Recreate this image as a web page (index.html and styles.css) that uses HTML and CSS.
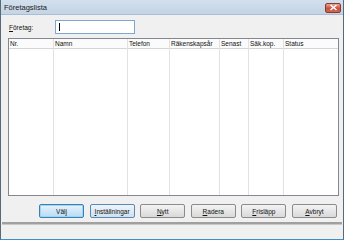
FILE: index.html
```html
<!DOCTYPE html>
<html lang="sv">
<head>
    <meta charset="UTF-8">
    <title>Företagslista</title>
    <link rel="stylesheet" href="styles.css">
</head>
<body>
    <div class="window">
        <div class="titlebar">
            <span class="title">Företagslista</span>
            <span class="close">
                <svg width="9" height="7" viewBox="0 0 9 7"><path d="M1.5 1 L7.5 6 M7.5 1 L1.5 6" stroke="#fff" stroke-width="1.6"/></svg>
            </span>
        </div>
        <div class="client">
            <div class="form-row">
                <label class="label"><u>F</u>öretag:</label>
                <div class="input"><span class="caret"></span></div>
            </div>
            <div class="list">
                <div class="col"><div class="head">Nr.</div></div>
                <div class="col"><div class="head">Namn</div></div>
                <div class="col"><div class="head">Telefon</div></div>
                <div class="col"><div class="head">Räkenskapsår</div></div>
                <div class="col"><div class="head">Senast</div></div>
                <div class="col"><div class="head">Säk.kop.</div></div>
                <div class="col last"><div class="head">Status</div></div>
            </div>
            <div class="buttons">
                <button class="btn default">Välj</button>
                <button class="btn hot"><u>I</u>nställningar</button>
                <button class="btn"><u>N</u>ytt</button>
                <button class="btn"><u>R</u>adera</button>
                <button class="btn"><u>F</u>risläpp</button>
                <button class="btn"><u>A</u>vbryt</button>
            </div>
            <div class="separator"></div>
        </div>
    </div>
</body>
</html>
```

FILE: styles.css
```css
body {
    margin: 0;
    background-color: #f0f0f0;
    font-family: "Liberation Sans", Arial, sans-serif;
    font-size: 6.5px;
    color: #111;
}
.window {
    width: 344px;
    height: 240px;
    box-sizing: border-box;
    border-left: 1px solid #58697a;
    border-right: 1px solid #58697a;
    border-bottom: 1px solid #3d8ec9;
    background: #f0f0f0;
    display: flex;
    flex-direction: column;
}
.titlebar {
    height: 15px;
    flex: none;
    display: flex;
    align-items: center;
    justify-content: space-between;
    padding: 0 2px 0 3px;
    background: linear-gradient(#d3dfec, #c4d4e6);
    border-bottom: 1px solid #a9bdd3;
    box-sizing: border-box;
}
.title {
    font-size: 7.5px;
    color: #1a1a1a;
}
.close {
    width: 16px;
    height: 10px;
    margin-top: 1px;
    border-radius: 2px;
    border: 1px solid #8a3b2f;
    background: linear-gradient(#e9a497, #c9523d 55%, #d4664e);
    box-sizing: border-box;
    display: flex;
    align-items: center;
    justify-content: center;
}
.client {
    flex: 1;
    padding: 5px 4px 0 7px;
    display: flex;
    flex-direction: column;
}
.form-row {
    display: flex;
    align-items: center;
    height: 14px;
}
.label {
    width: 46px;
    padding-left: 1px;
}
.input {
    width: 80px;
    height: 14px;
    box-sizing: border-box;
    background: #fff;
    border: 1px solid #7ea6d4;
    display: flex;
    align-items: center;
    padding-left: 3px;
}
.caret {
    width: 1px;
    height: 8px;
    background: #000;
}
.list {
    margin-top: 4px;
    height: 158px;
    box-sizing: border-box;
    border: 1px solid #828790;
    background: #fff;
    display: grid;
    grid-template-columns: 45px 74px 42px 50px 29px 35px 1fr;
}
.col {
    border-right: 1px solid #e2e2e2;
}
.col.last {
    border-right: none;
}
.head {
    height: 9px;
    line-height: 9px;
    padding-left: 1px;
    border-bottom: 1px solid #d5d5d5;
    background: #fbfbfb;
    white-space: nowrap;
    overflow: hidden;
}
.buttons {
    display: flex;
    gap: 5.6px;
    margin-top: 8px;
    padding-left: 31px;
}
.btn {
    width: 45px;
    height: 14px;
    padding: 0;
    font-family: inherit;
    font-size: 6.5px;
    color: #111;
    border: 1px solid #8b8b8b;
    border-radius: 2px;
    background: linear-gradient(#f4f4f4, #e6e6e6 50%, #d9d9d9);
}
.btn.default {
    border-color: #3c7fb1;
    background: linear-gradient(#e8f4fc, #cfe6f8 50%, #b9dbf4);
    box-shadow: inset 0 0 0 1px #9ed4f4;
}
.btn.hot {
    border-color: #5a8ab4;
    background: linear-gradient(#eef5fb, #dfeaf4 50%, #d0e0ee);
}
.separator {
    margin: 4px -3px 0 -6px;
    height: 2px;
    background: #a0a0a0;
    border-bottom: 1px solid #c8c8c8;
}
```
